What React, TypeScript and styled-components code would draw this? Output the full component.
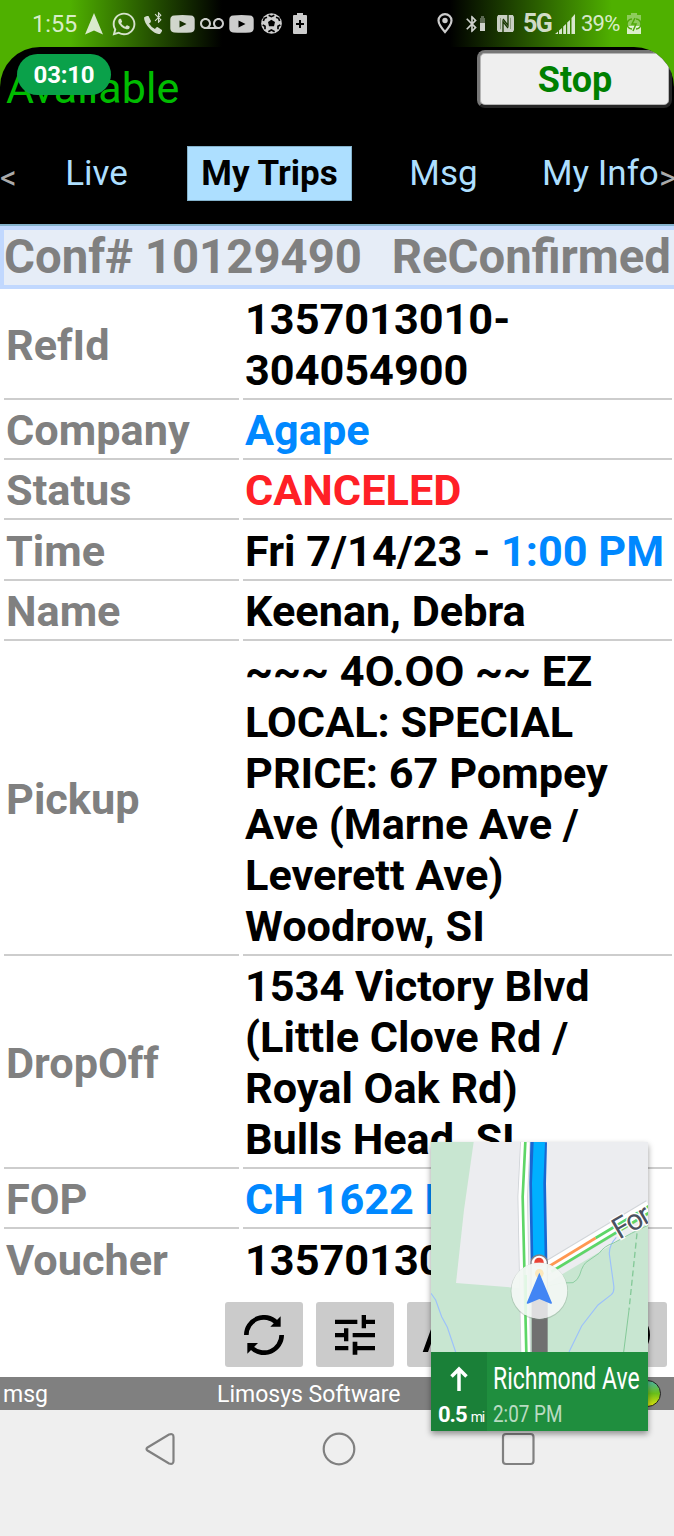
import React from "react";
import styled, { createGlobalStyle } from "styled-components";
import { FaPhoneAlt, FaWhatsapp } from "react-icons/fa";
import { MdBluetooth, MdVoicemail } from "react-icons/md";

const GlobalStyle = createGlobalStyle`
  * { box-sizing: border-box; }
  body { margin: 0; background: #efefef; font-family: Roboto, "Liberation Sans", sans-serif; }
`;

const Screen = styled.div`
  position: relative;
  width: 674px;
  height: 1536px;
  overflow: hidden;
  display: flex;
  flex-direction: column;
  background: #fff;
`;

const Top = styled.div`
  height: 226px;
  flex: none;
  background: linear-gradient(90deg, #4fb000 0, #4fb000 70px, #000 222px, #000 450px, #4fb000 612px, #4fb000 100%);
`;

const StatusBar = styled.div`
  height: 47px;
  display: flex;
  align-items: center;
  color: rgba(255, 255, 255, 0.8);
  white-space: nowrap;
`;

const Slot = styled.span<{ $w: number; $gap: number }>`
  flex: none;
  width: ${(p) => p.$w}px;
  margin-left: ${(p) => p.$gap}px;
  display: flex;
  justify-content: center;
  align-items: center;
  svg { flex: none; display: block; }
`;

const StatusText = styled(Slot)<{ $bold?: boolean; $size?: number; $ls?: number }>`
  justify-content: flex-start;
  font-size: ${(p) => p.$size ?? 23}px;
  font-weight: ${(p) => (p.$bold ? 700 : 400)};
  letter-spacing: ${(p) => p.$ls ?? 0}px;
  line-height: 28px;
  padding-top: 1px;
`;

const PhoneSlot = styled(Slot)`
  position: relative;
  justify-content: flex-start;
  padding-top: 2px;
`;

const PhoneBadge = styled.span`
  position: absolute;
  top: -3px;
  left: 8px;
`;

const Header = styled.header`
  position: relative;
  height: 179px;
  overflow: hidden;
  border-radius: 40px 40px 0 0;
  background: #000;
  border-bottom: 2px solid #84b2cb;
`;

const HeaderRow = styled.div`
  display: flex;
  justify-content: space-between;
  height: 99px;
  padding: 3px 2px 0 6px;
`;

const Availability = styled.div`
  font-size: 43px;
  line-height: 50px;
  padding-top: 13px;
  letter-spacing: 0.1px;
  color: #00bc00;
`;

const StopButton = styled.button`
  width: 195px;
  height: 58px;
  padding: 1px 0 0 1px;
  border: 3px solid;
  border-color: #777 #262626 #262626 #777;
  border-radius: 8px;
  background: #efefef;
  box-shadow: inset 0 0 0 1px #b5b5b5;
  color: #008000;
  font: 700 36px/50px Roboto, sans-serif;
`;

const TimerPill = styled.div`
  position: absolute;
  left: 17px;
  top: 7px;
  width: 94px;
  height: 41px;
  border-radius: 21px;
  background: #0aa14a;
  color: #fff;
  font-size: 24px;
  font-weight: 700;
  line-height: 43px;
  letter-spacing: -0.2px;
  text-align: center;
`;

const Tabs = styled.nav`
  display: flex;
  height: 55px;
  align-items: center;
  color: #addfff;
  font-size: 35px;
  line-height: 53px;
  white-space: nowrap;
`;

const Tab = styled.span<{ $active?: boolean; $w: number; $gap: number }>`
  flex: none;
  width: ${(p) => p.$w}px;
  height: 55px;
  margin-left: ${(p) => p.$gap}px;
  text-align: center;
  border: 1px solid ${(p) => (p.$active ? "#84b2cb" : "transparent")};
  background: ${(p) => (p.$active ? "#addfff" : "transparent")};
  color: ${(p) => (p.$active ? "#000" : "inherit")};
  font-weight: ${(p) => (p.$active ? 700 : 400)};
`;

const Chevron = styled.span`
  flex: none;
  width: 17px;
  padding-top: 7px;
  color: #aaa;
  font-size: 33px;
`;

const ConfBar = styled.div`
  flex: none;
  height: 63px;
  display: flex;
  justify-content: space-between;
  margin-right: -4px;
  padding: 0 3px 0 0;
  border: 4px solid #c1d8fe;
  background: #e6edf7;
  color: #808080;
  font-size: 47.3px;
  font-weight: 700;
  line-height: 54px;
  white-space: nowrap;
`;

const Trip = styled.div`
  flex: none;
  display: grid;
  grid-template-columns: 235px 429px;
  grid-template-rows: 111px 60px 60px 61px 60px 315px 213px 60px 62px;
  column-gap: 4px;
  padding-left: 4px;
  font-size: 43.25px;
  font-weight: 700;
  line-height: 51px;
`;

const Cell = styled.div<{ $last?: boolean }>`
  display: flex;
  flex-direction: column;
  justify-content: center;
  padding: 5px 0 2px 2px;
  border-bottom: 2px solid ${(p) => (p.$last ? "transparent" : "#cdcdcd")};
  white-space: nowrap;
`;

const Label = styled(Cell)`
  color: #808080;
`;

const Line = styled.div<{ $color?: string }>`
  color: ${(p) => p.$color ?? "#000"};
`;

const Blue = styled.span`
  color: #0088ff;
`;

const Tools = styled.div`
  flex: none;
  display: flex;
  gap: 13px;
  height: 86px;
  padding: 11px 0 0 225px;
`;

const ToolButton = styled.div<{ $start?: boolean }>`
  width: 78px;
  height: 65px;
  border-radius: 3px;
  background: #cbcbcb;
  display: flex;
  align-items: center;
  justify-content: ${(p) => (p.$start ? "flex-start" : "center")};
  padding-left: ${(p) => (p.$start ? 15 : 0)}px;
`;

const Footer = styled.footer`
  flex: none;
  height: 33px;
  display: flex;
  align-items: center;
  background: #808080;
  color: #fff;
  font-size: 23px;
  line-height: 33px;
`;

const FooterText = styled.span<{ $w: number }>`
  width: ${(p) => p.$w}px;
  padding: 1px 0 0 3px;
  flex: none;
  white-space: nowrap;
`;

const Led = styled.span`
  width: 27px;
  height: 27px;
  margin-left: 35px;
  border: 1.5px solid #222;
  border-radius: 50%;
  background: linear-gradient(#52b788 10%, #6abf1a 50%, #d4e010 95%);
`;

const NavBar = styled.div`
  flex: 1;
  display: flex;
  align-items: flex-start;
  padding: 22px 0 0 145px;
  background: #efefef;
  gap: 145px;
`;

const NavCard = styled.div`
  position: absolute;
  left: 431px;
  top: 1142px;
  width: 217px;
  height: 289px;
  display: flex;
  flex-direction: column;
  box-shadow: 0 3px 6px rgba(0, 0, 0, 0.4);
  svg { display: block; }
`;

const Direction = styled.div`
  display: flex;
  height: 79px;
  color: #fff;
`;

const Turn = styled.div`
  flex: none;
  width: 56px;
  background: #1a8038;
  display: flex;
  flex-direction: column;
  align-items: center;
  padding-top: 14px;
`;

const Distance = styled.div`
  width: 56px;
  padding-left: 7px;
  margin-top: 10px;
  display: flex;
  align-items: baseline;
  font-size: 22px;
  font-weight: 700;
  line-height: 26px;
  letter-spacing: -1px;
  white-space: nowrap;
`;

const Unit = styled.span`
  margin-left: 4px;
  font-size: 14px;
  font-weight: 400;
  letter-spacing: -1.2px;
`;

const Street = styled.div`
  flex: none;
  width: 161px;
  background: #1f8e3e;
  padding: 6px 0 0 6px;
  white-space: nowrap;
`;

const Squeezed = styled.div<{ $size: number; $scale: number; $alpha?: number; $lh: number }>`
  width: max-content;
  font-size: ${(p) => p.$size}px;
  line-height: ${(p) => p.$lh}px;
  color: rgba(255, 255, 255, ${(p) => p.$alpha ?? 1});
  transform: scaleX(${(p) => p.$scale});
  transform-origin: left;
`;

const VideoIcon = () => (
  <svg width="25" height="18" viewBox="0 0 25 18">
    <path fill="currentColor" fillRule="evenodd" d="M4 .5Q12.500 -.3 21 .5Q24.500 .8 24.700 4.500V13.500Q24.500 17 21 17.500Q12.500 18.200 4 17.500Q.5 17 .3 13.500V4.500Q.5 .8 4 .5ZM9.500 5.500V12.500L16.500 9Z" />
  </svg>
);

const BallIcon = () => (
  <svg width="21" height="21" viewBox="0 0 63 63">
    <circle cx="31.500" cy="31.500" r="31" fill="#cfcfcf" />
    <path d="M31 20L42 27L39 40H24L21 27Z" fill="#000" />
    <path d="M23 7L31 11L40 7M7 24L10 16L18 13M5 36L12 40L12 49M22 56L31 51L41 56M51 49L51 40L58 36M56 24L53 16L45 13" fill="none" stroke="#000" strokeWidth="5" />
  </svg>
);

const RefreshIcon = () => (
  <svg width="40" height="40" viewBox="0 0 120 120">
    <g fill="none" stroke="#000" strokeWidth="14">
      <path d="M7 60A53 53 0 0 1 97 22" />
      <path d="M113 60A53 53 0 0 1 23 98" />
    </g>
    <path d="M110 4V35H79ZM10 116V84H42Z" />
  </svg>
);

const TuneIcon = () => (
  <svg width="40" height="40" viewBox="0 0 120 120">
    <path d="M0 14H67V27H0ZM80 0H93V14H120V27H93V40H80ZM0 54H27V40H40V79H27V67H0ZM53 54H120V67H53ZM0 93H40V106H0ZM53 80H67V93H120V106H67V119H53Z" />
  </svg>
);

const PeakIcon = () => (
  <svg width="30" height="34" viewBox="0 0 30 34" fill="none" stroke="#000" strokeWidth="5">
    <path d="M3 35L15 2L27 35" />
  </svg>
);

const ClockIcon = () => (
  <svg width="46" height="46" viewBox="0 0 46 46" fill="none" stroke="#000" strokeWidth="4">
    <circle cx="23" cy="23" r="20" />
    <path d="M23 10V24L32 30" />
  </svg>
);

const MapView = () => (
  <svg width="217" height="210" viewBox="34 36 651 630">
    <rect x="34" y="36" width="651" height="630" fill="#c8e6d1" />
    <path d="M162 36H685V280L390 455L310 475L109 459L133 240Z" fill="#ecedf0" />
    <path d="M34 490L48 510L66 560L83 592L108 666M448 666L486 588L535 525L575 494Q585 485 582 465L569 372Q568 345 590 322" fill="none" stroke="#9cc1fa" strokeWidth="3.5" />
    <path d="M370 472L425 459L460 458Q475 450 480 435Q490 400 505 393L538 370Q555 347 580 340L635 310L685 286" fill="none" stroke="#8dcea2" strokeWidth="3" />
    <path d="M652 310L628 540" fill="none" stroke="#84c998" strokeWidth="4" strokeDasharray="18 10" />
    <path d="M628 540L612 666" fill="none" stroke="#84c998" strokeWidth="3" />
    <path d="M365 424L690 229" stroke="#d1d5d9" strokeWidth="42" />
    <path d="M365 424L690 229" stroke="#fff" strokeWidth="36" />
    <path d="M385 411L528 324" stroke="#ff9852" strokeWidth="8" />
    <path d="M528 324L690 227M395 425L690 247" stroke="#5ed667" strokeWidth="8" />
    <path d="M317 36L309 200L318 666" fill="none" stroke="#cfd3d7" strokeWidth="31" />
    <path d="M317 36L309 200L318 666" fill="none" stroke="#fff" strokeWidth="26" />
    <path d="M317 36L309 200L320 666" fill="none" stroke="#5ed667" strokeWidth="8" />
    <path d="M336 470H384V666H336Z" fill="#707070" />
    <path d="M357 36L354 160L358 390" fill="none" stroke="#1967d2" strokeWidth="50" />
    <path d="M359 36L354 160L358 390" fill="none" stroke="#00b0ff" strokeWidth="34" />
    <path d="M334 395A25 25 0 0 1 383 395V490H334Z" fill="#fff" stroke="#808087" strokeWidth="4" />
    <circle cx="358" cy="397" r="14" fill="#ea4335" />
    <path d="M344 398A14 14 0 0 0 372 398Z" fill="#f9c9c6" />
    <circle cx="359" cy="484" r="86" fill="#7c9282" opacity=".35" />
    <circle cx="359" cy="482" r="84" fill="#f5faf6" opacity=".93" />
    <path d="M336 505H384V562Q359 570 336 562Z" fill="#dededf" />
    <path d="M318 435V555" stroke="#e1f7e4" strokeWidth="8" />
    <circle cx="359" cy="430" r="13" fill="#fce8bd" />
    <path d="M359 428L397 519Q397 522 393 521L359 507L325 521Q321 522 321 519Z" fill="#4285f4" />
    <text x="0" y="0" transform="translate(599 329) rotate(-30)" fontFamily="Roboto" fontSize="87" letterSpacing="-5" fill="#4b5260" stroke="#fff" strokeWidth="8" paintOrder="stroke">
      For
    </text>
  </svg>
);

type Row = { label: string; lines: React.ReactNode[]; color?: string };

const rows: Row[] = [
  { label: "RefId", lines: ["1357013010-", "304054900"] },
  { label: "Company", lines: ["Agape"], color: "#0088ff" },
  { label: "Status", lines: ["CANCELED"], color: "#ff2026" },
  { label: "Time", lines: [<>Fri 7/14/23 - <Blue>1:00 PM</Blue></>] },
  { label: "Name", lines: ["Keenan, Debra"] },
  {
    label: "Pickup",
    lines: ["~~~ 4O.OO ~~ EZ", "LOCAL: SPECIAL", "PRICE: 67 Pompey", "Ave (Marne Ave /", "Leverett Ave)", "Woodrow, SI"],
  },
  { label: "DropOff", lines: ["1534 Victory Blvd", "(Little Clove Rd /", "Royal Oak Rd)", "Bulls Head, SI"] },
  { label: "FOP", lines: ["CH 1622 E"], color: "#0088ff" },
  { label: "Voucher", lines: ["1357013010"] },
];

export default function App() {
  return (
    <Screen>
      <GlobalStyle />
      <Top>
        <StatusBar>
          <StatusText $w={44} $gap={32} $size={23.5}>1:55</StatusText>
          <Slot $w={18} $gap={9}>
            <svg width="18" height="22" viewBox="0 0 18 22"><path fill="currentColor" d="M9 0L18 21.500L9 17.500L0 21.500Z" /></svg>
          </Slot>
          <Slot $w={24} $gap={9}><FaWhatsapp size={26} /></Slot>
          <PhoneSlot $w={20} $gap={8}>
            <svg width="18" height="18" viewBox="0 0 18 18">
              <path fill="currentColor" d="M0 1.500Q3 -.5 4.500 0L7 5Q7 6.500 5 7.500Q7 11 11 13Q12 11 13.500 11L18 14Q18.500 15.500 16 18Q12 18.500 6.500 13.500Q0 7 0 1.500Z" />
            </svg>
            <PhoneBadge><MdBluetooth size={13} /></PhoneBadge>
          </PhoneSlot>
          <Slot $w={25} $gap={6}><VideoIcon /></Slot>
          <Slot $w={22} $gap={6}><MdVoicemail size={24} /></Slot>
          <Slot $w={25} $gap={6}><VideoIcon /></Slot>
          <Slot $w={22} $gap={6}><BallIcon /></Slot>
          <Slot $w={14} $gap={11}>
            <svg width="14" height="21" viewBox="0 0 14 21">
              <path fill="currentColor" fillRule="evenodd" d="M4 0H10V2H13Q14 2 14 3V20Q14 21 13 21H1Q0 21 0 20V3Q0 2 1 2H4ZM6 7V10H3V12H6V15H8V12H11V10H8V7Z" />
            </svg>
          </Slot>
          <Slot $w={15} $gap={130}>
            <svg width="16" height="21" viewBox="0 0 16 21">
              <path d="M8 19Q1.500 11.500 1.500 7.500A6.500 6.300 0 0 1 14.500 7.500Q14.500 11.500 8 19Z" fill="none" stroke="currentColor" strokeWidth="2.200" />
              <circle cx="8" cy="7.500" r="2.700" fill="currentColor" />
            </svg>
          </Slot>
          <Slot $w={12} $gap={14}><MdBluetooth size={20} /></Slot>
          <Slot $w={5} $gap={2}>
            <svg width="5" height="15" viewBox="0 0 5 15" fill="currentColor"><path opacity=".4" d="M1 0H4V2H5V7H0V2H1Z" /><path d="M0 7H5V15H0Z" /></svg>
          </Slot>
          <Slot $w={17} $gap={12}>
            <svg width="17" height="17" viewBox="0 0 51 51">
              <rect width="51" height="51" rx="8" fill="#c9cfc4" />
              <path d="M18 51V20L33 39M33 0V31L18 12M10 9V43M41 8V42" stroke="#173600" strokeWidth="4" fill="none" />
              <path d="M7 0V51M44 0V51" stroke="#c9cfc4" strokeWidth="8" />
            </svg>
          </Slot>
          <StatusText $w={28} $gap={9} $bold $size={25} $ls={-1.7}>5G</StatusText>
          <Slot $w={20} $gap={4}>
            <svg width="20" height="20" viewBox="0 0 20 20" fill="currentColor"><path d="M0 20L3 17.500V20ZM4 16.500L7 14V20H4ZM8.200 12.500L11 10V20H8.200ZM12.200 8.500L15 6V20H12.200ZM16.500 4L20 0V20H16.500Z" /></svg>
          </Slot>
          <StatusText $w={42} $gap={6} $size={22} $ls={-0.8}>39%</StatusText>
          <Slot $w={14} $gap={4}>
            <svg width="14" height="21" viewBox="0 0 14 21">
              <path fill="currentColor" opacity=".45" d="M4 0H10V2H14V14H0V2H4Z" />
              <path fill="currentColor" d="M0 13H14V21H0Z" />
              <path d="M5 6A5 5 0 0 0 5 16M9 6A5 5 0 0 1 9 16M8 5L5 11H9L6 18" fill="none" stroke="#4fa80a" strokeWidth="1.500" />
            </svg>
          </Slot>
        </StatusBar>
        <Header>
          <HeaderRow>
            <Availability>Available</Availability>
            <StopButton>Stop</StopButton>
          </HeaderRow>
          <TimerPill>03:10</TimerPill>
          <Tabs>
            <Chevron>&lt;</Chevron>
            <Tab $w={91} $gap={34}>Live</Tab>
            <Tab $w={165} $gap={45} $active>My Trips</Tab>
            <Tab $w={97} $gap={43}>Msg</Tab>
            <Tab $w={118} $gap={49}>My Info</Tab>
            <Chevron>&gt;</Chevron>
          </Tabs>
        </Header>
      </Top>
      <ConfBar>
        <span>Conf# 10129490</span>
        <span>ReConfirmed</span>
      </ConfBar>
      <Trip>
        {rows.map((row, i) => {
          const last = i === rows.length - 1;
          return (
            <React.Fragment key={row.label}>
              <Label $last={last}>{row.label}</Label>
              <Cell $last={last}>
                {row.lines.map((line, j) => (
                  <Line key={j} $color={row.color}>{line}</Line>
                ))}
              </Cell>
            </React.Fragment>
          );
        })}
      </Trip>
      <Tools>
        <ToolButton><RefreshIcon /></ToolButton>
        <ToolButton><TuneIcon /></ToolButton>
        <ToolButton $start><PeakIcon /></ToolButton>
        <ToolButton />
        <ToolButton><ClockIcon /></ToolButton>
      </Tools>
      <Footer>
        <FooterText $w={214}>msg</FooterText>
        <FooterText $w={385}>Limosys Software</FooterText>
        <Led />
      </Footer>
      <NavBar>
        <svg width="32" height="34" viewBox="0 0 32 34" fill="none" stroke="#808080" strokeWidth="2.200">
          <path d="M2.500 15.500L24 2.500Q28.500 1 28.500 5V29Q28.500 33 24 31.500L2.500 18.500Q.5 17 2.500 15.500Z" />
        </svg>
        <svg width="34" height="34" viewBox="0 0 34 34" fill="none" stroke="#808080" strokeWidth="2.200"><circle cx="17" cy="17" r="15.300" /></svg>
        <svg width="34" height="34" viewBox="0 0 34 34" fill="none" stroke="#808080" strokeWidth="2.200"><rect x="2" y="2" width="30.500" height="30" rx="3" /></svg>
      </NavBar>
      <NavCard>
        <MapView />
        <Direction>
          <Turn>
            <svg width="18" height="26" viewBox="0 0 18 26" fill="none" stroke="#fff" strokeWidth="3.500"><path d="M9 25V3M1.500 10.500L9 3L16.500 10.500" /></svg>
            <Distance>0.5<Unit>mi</Unit></Distance>
          </Turn>
          <Street>
            <Squeezed $size={32} $scale={0.718} $lh={41}>Richmond Ave</Squeezed>
            <Squeezed $size={23} $scale={0.82} $alpha={0.7} $lh={32}>2:07 PM</Squeezed>
          </Street>
        </Direction>
      </NavCard>
    </Screen>
  );
}
